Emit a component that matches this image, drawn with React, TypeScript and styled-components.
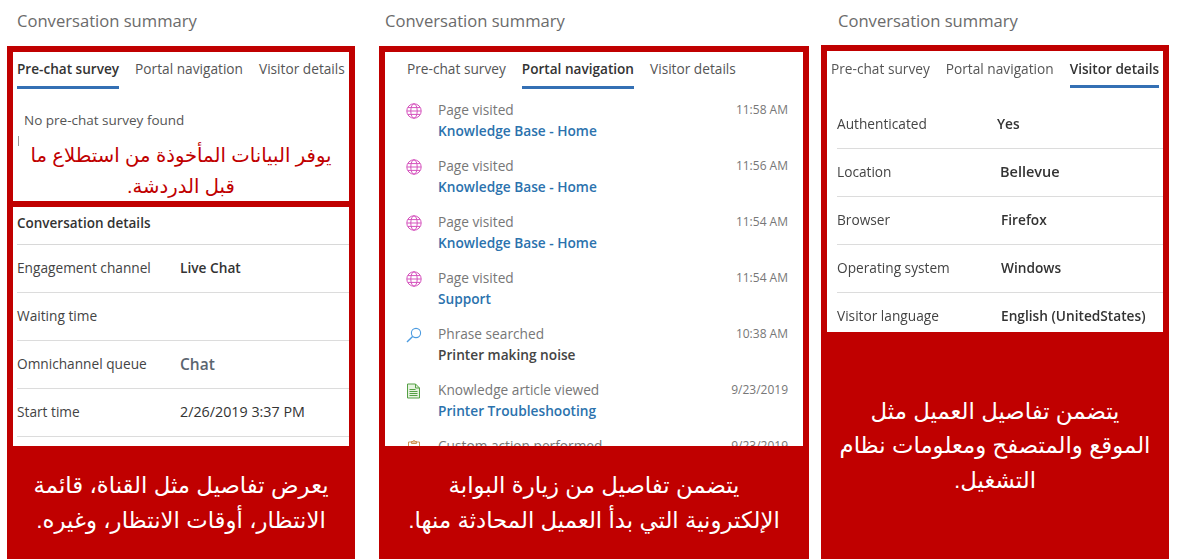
import { FC, ReactNode } from "react";
import styled, { createGlobalStyle } from "styled-components";

const RED = "#c00000";

const GlobalStyle = createGlobalStyle`
    html, body {
        margin: 0;
        padding: 0;
        background: #fff;
    }
    body {
        font-family: "Open Sans", "Noto Sans", sans-serif;
        overflow: hidden;
    }
`;

const Page = styled.div`
    display: flex;
    width: 1187px;
    height: 559px;
    padding-left: 7px;
    box-sizing: border-box;
`;

const Column = styled.div<{ $width: number; $gap: number }>`
    display: flex;
    flex-direction: column;
    flex: none;
    width: ${props => props.$width}px;
    margin-right: ${props => props.$gap}px;
    height: 559px;
    padding-top: 10px;
    box-sizing: border-box;
`;

const Title = styled.div<{ $indent: number; $height?: number }>`
    height: ${props => props.$height ?? 36}px;
    flex: none;
    padding-left: ${props => props.$indent}px;
    font-size: 16.6px;
    line-height: 21px;
    color: #6b6b6b;
`;

const Frame = styled.div`
    flex: 1;
    min-height: 0;
    display: flex;
    flex-direction: column;
    background: ${RED};
    padding: 6px 6px 0;
`;

const Sheet = styled.div<{ $height: number; $gapBelow?: number; $soft?: boolean }>`
    flex: none;
    height: ${props => props.$height}px;
    margin-bottom: ${props => props.$gapBelow ?? 0}px;
    background: #fff;
    overflow: hidden;
    ${props => props.$soft && "filter: blur(0.35px);"}
`;

const Tabs = styled.div<{ $indent: number; $gap: number }>`
    display: flex;
    gap: ${props => props.$gap}px;
    height: 37px;
    padding-left: ${props => props.$indent}px;
`;

const Tab = styled.div<{ $active?: boolean; $textTop: number }>`
    height: 37px;
    box-sizing: border-box;
    padding-top: ${props => props.$textTop}px;
    font-size: ${props => (props.$active ? 13.6 : 13.7)}px;
    line-height: 20px;
    white-space: nowrap;
    color: ${props => (props.$active ? "#333" : "#555")};
    font-weight: ${props => (props.$active ? 600 : 400)};
    border-bottom: 3px solid ${props => (props.$active ? "#3470b4" : "transparent")};
`;

const EmptyNote = styled.div`
    margin: 21px 0 0 11px;
    font-size: 13.5px;
    line-height: 20px;
    color: #555;
`;

const Caret = styled.div`
    width: 1px;
    height: 10px;
    margin: 6px 0 0 5px;
    background: #999;
`;

const RedNote = styled.div`
    margin-top: -6px;
    direction: rtl;
    text-align: center;
    font-family: "Liberation Sans", "DejaVu Sans", sans-serif;
    font-size: 19.6px;
    line-height: 31px;
    color: ${RED};
`;

const DetailsHeading = styled.div`
    height: 38px;
    box-sizing: border-box;
    margin-left: 4px;
    padding-top: 6px;
    border-bottom: 1px solid #d8d8d8;
    font-size: 13.5px;
    line-height: 20px;
    font-weight: 600;
    color: #333;
`;

const DetailRows = styled.div<{ $top?: number }>`
    margin-top: ${props => props.$top ?? 0}px;
`;

const DetailRow = styled.div<{ $indent: number; $labelWidth: number }>`
    display: flex;
    align-items: center;
    height: 48px;
    box-sizing: border-box;
    padding-bottom: 2px;
    margin-left: ${props => props.$indent}px;
    border-bottom: 1px solid #dcdcdc;
    font-size: 13.7px;
    color: #444;

    & > span:first-child {
        flex: none;
        width: ${props => props.$labelWidth}px;
    }
`;

const DetailValue = styled.span<{ $shift?: number; $size?: number; $weight?: number; $muted?: boolean }>`
    margin-left: ${props => props.$shift ?? 0}px;
    font-size: ${props => props.$size ?? 13.7}px;
    font-weight: ${props => props.$weight ?? 600};
    white-space: nowrap;
    color: ${props => (props.$muted ? "#5b6570" : "#333")};
`;

const NavList = styled.div`
    padding: 10px 15px 0 21px;
`;

const NavRow = styled.div`
    display: grid;
    grid-template-columns: 32px 1fr auto;
    height: 56px;
`;

const NavIcon = styled.div`
    padding-top: 3px;
    height: 18px;
`;

const NavLabel = styled.div`
    font-size: 13.7px;
    line-height: 21px;
    color: #777;
`;

const NavTime = styled.div`
    padding-top: 1px;
    font-size: 12px;
    line-height: 20px;
    color: #777;
`;

const NavValue = styled.div<{ $link?: boolean }>`
    font-size: 13.7px;
    line-height: 21px;
    font-weight: 600;
    color: ${props => (props.$link ? "#2b72ad" : "#444")};
`;

const Caption = styled.div`
    flex: 1;
    display: flex;
    align-items: center;
    justify-content: center;
    direction: rtl;
    text-align: center;
    font-family: "Liberation Sans", "DejaVu Sans", sans-serif;
    font-size: 22.8px;
    line-height: 34.5px;
    color: #fff;
`;

const GlobeIcon = () => (
    <svg width="16" height="16" viewBox="0 0 16 16" fill="none" stroke="#d552bd" strokeWidth="1">
        <circle cx="8" cy="8" r="7.2" />
        <ellipse cx="8" cy="8" rx="3.2" ry="7.2" />
        <path d="M1 8h14M2 4.6h12M2 11.4h12" />
    </svg>
);

const SearchIcon = () => (
    <svg width="16" height="16" viewBox="0 0 16 16" fill="none" stroke="#4c9be0" strokeWidth="1.1">
        <circle cx="10" cy="6" r="4.6" />
        <path d="M6.6 9.4L1 15" strokeWidth="1.4" />
    </svg>
);

const ArticleIcon = () => (
    <svg width="16" height="16" viewBox="0 0 16 16" fill="none" stroke="#55a044" strokeWidth="1">
        <path d="M1.5 1h8l4 4v10h-12z" fill="#e6f3e0" />
        <path d="M9.5 1v4h4" />
        <path d="M3.5 6.5h6M3.5 8.5h8M3.5 10.5h8M3.5 12.5h8" />
    </svg>
);

const ClipboardIcon = () => (
    <svg width="16" height="16" viewBox="0 0 16 16" fill="none" stroke="#cf9252" strokeWidth="1">
        <path d="M2.5 3h11v12h-11z" />
        <path d="M5.5 4.5v-2h1.5a1 1 0 0 1 2 0h1.5v2z" />
        <path d="M5 8h6M5 10.5h6" />
    </svg>
);

type NavItem = { icon: ReactNode; label: string; time: string; value?: string; link?: boolean };

const navItems: NavItem[] = [
    { icon: <GlobeIcon />, label: "Page visited", time: "11:58 AM", value: "Knowledge Base - Home", link: true },
    { icon: <GlobeIcon />, label: "Page visited", time: "11:56 AM", value: "Knowledge Base - Home", link: true },
    { icon: <GlobeIcon />, label: "Page visited", time: "11:54 AM", value: "Knowledge Base - Home", link: true },
    { icon: <GlobeIcon />, label: "Page visited", time: "11:54 AM", value: "Support", link: true },
    { icon: <SearchIcon />, label: "Phrase searched", time: "10:38 AM", value: "Printer making noise" },
    { icon: <ArticleIcon />, label: "Knowledge article viewed", time: "9/23/2019", value: "Printer Troubleshooting", link: true },
    { icon: <ClipboardIcon />, label: "Custom action performed", time: "9/23/2019" },
];

const TabStrip: FC<{ active: number; indent: number; gap: number; textTop?: number }> = ({ active, indent, gap, textTop = 7 }) => (
    <Tabs $indent={indent} $gap={gap}>
        {["Pre-chat survey", "Portal navigation", "Visitor details"].map((name, index) => (
            <Tab key={name} $active={index === active} $textTop={textTop}>{name}</Tab>
        ))}
    </Tabs>
);

const App: FC = () => (
    <Page>
        <GlobalStyle />
        <Column $width={348} $gap={24}>
            <Title $indent={10}>Conversation summary</Title>
            <Frame>
                <Sheet $height={149} $gapBelow={6}>
                    <TabStrip active={0} indent={4} gap={16} />
                    <EmptyNote>No pre-chat survey found</EmptyNote>
                    <Caret />
                    <RedNote>
                        يوفر البيانات المأخوذة من استطلاع ما
                        <br />
                        قبل الدردشة.
                    </RedNote>
                </Sheet>
                <Sheet $height={239}>
                    <DetailsHeading>Conversation details</DetailsHeading>
                    <DetailRow $indent={4} $labelWidth={163}>
                        <span>Engagement channel</span>
                        <DetailValue>Live Chat</DetailValue>
                    </DetailRow>
                    <DetailRow $indent={4} $labelWidth={163}>
                        <span>Waiting time</span>
                    </DetailRow>
                    <DetailRow $indent={4} $labelWidth={163}>
                        <span>Omnichannel queue</span>
                        <DetailValue $size={15.5} $muted>Chat</DetailValue>
                    </DetailRow>
                    <DetailRow $indent={4} $labelWidth={163}>
                        <span>Start time</span>
                        <DetailValue $size={14.3} $weight={400}>2/26/2019 3:37 PM</DetailValue>
                    </DetailRow>
                </Sheet>
                <Caption>
                    <div>
                        يعرض تفاصيل مثل القناة، قائمة
                        <br />
                        الانتظار، أوقات الانتظار، وغيره.
                    </div>
                </Caption>
            </Frame>
        </Column>

        <Column $width={430} $gap={12}>
            <Title $indent={6}>Conversation summary</Title>
            <Frame>
                <Sheet $height={394}>
                    <TabStrip active={1} indent={22} gap={16} />
                    <NavList>
                        {navItems.map((item, index) => (
                            <NavRow key={index}>
                                <NavIcon>{item.icon}</NavIcon>
                                <div>
                                    <NavLabel>{item.label}</NavLabel>
                                    {item.value && <NavValue $link={item.link}>{item.value}</NavValue>}
                                </div>
                                <NavTime>{item.time}</NavTime>
                            </NavRow>
                        ))}
                    </NavList>
                </Sheet>
                <Caption>
                    <div>
                        يتضمن تفاصيل من زيارة البوابة
                        <br />
                        الإلكترونية التي بدأ العميل المحادثة منها.
                    </div>
                </Caption>
            </Frame>
        </Column>

        <Column $width={348} $gap={0}>
            <Title $indent={17} $height={35}>Conversation summary</Title>
            <Frame>
                <Sheet $height={281} $soft>
                    <TabStrip active={2} indent={4} gap={16} textTop={8} />
                    <DetailRows $top={13}>
                        <DetailRow $indent={10} $labelWidth={160}>
                            <span>Authenticated</span>
                            <DetailValue>Yes</DetailValue>
                        </DetailRow>
                        <DetailRow $indent={10} $labelWidth={160}>
                            <span>Location</span>
                            <DetailValue $shift={3} $size={14.5}>Bellevue</DetailValue>
                        </DetailRow>
                        <DetailRow $indent={10} $labelWidth={160}>
                            <span>Browser</span>
                            <DetailValue $shift={4}>Firefox</DetailValue>
                        </DetailRow>
                        <DetailRow $indent={10} $labelWidth={160}>
                            <span>Operating system</span>
                            <DetailValue $shift={4}>Windows</DetailValue>
                        </DetailRow>
                        <DetailRow $indent={10} $labelWidth={160}>
                            <span>Visitor language</span>
                            <DetailValue $shift={4}>English (UnitedStates)</DetailValue>
                        </DetailRow>
                    </DetailRows>
                </Sheet>
                <Caption>
                    <div>
                        يتضمن تفاصيل العميل مثل
                        <br />
                        الموقع والمتصفح ومعلومات نظام
                        <br />
                        التشغيل.
                    </div>
                </Caption>
            </Frame>
        </Column>
    </Page>
);

export default App;
